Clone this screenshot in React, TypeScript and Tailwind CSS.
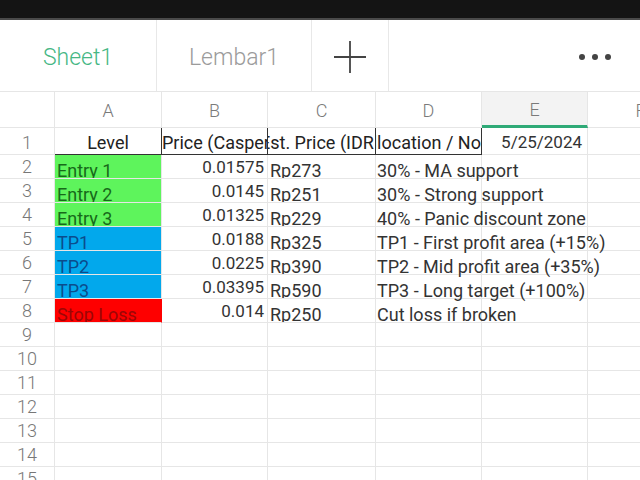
import React from 'react';

const FONT = { fontFamily: 'Roboto, "Noto Sans", sans-serif' };

type Tone = 'green' | 'blue' | 'red';

const ROWS: { level: string; price: string; idr: string; note: string; tone: Tone }[] = [
  { level: 'Entry 1', price: '0.01575', idr: 'Rp273', note: '30% - MA support', tone: 'green' },
  { level: 'Entry 2', price: '0.0145', idr: 'Rp251', note: '30% - Strong support', tone: 'green' },
  { level: 'Entry 3', price: '0.01325', idr: 'Rp229', note: '40% - Panic discount zone', tone: 'green' },
  { level: 'TP1', price: '0.0188', idr: 'Rp325', note: 'TP1 - First profit area (+15%)', tone: 'blue' },
  { level: 'TP2', price: '0.0225', idr: 'Rp390', note: 'TP2 - Mid profit area (+35%)', tone: 'blue' },
  { level: 'TP3', price: '0.03395', idr: 'Rp590', note: 'TP3 - Long target (+100%)', tone: 'blue' },
  { level: 'Stop Loss', price: '0.014', idr: 'Rp250', note: 'Cut loss if broken', tone: 'red' },
];

const toneCls: Record<Tone, string> = {
  green: 'bg-[#5ef45c] border-[#5ef45c] text-[#17691a]',
  blue: 'bg-[#02a8ec] border-[#02a8ec] text-[#0b4c8c]',
  red: 'bg-[#fe0000] border-[#fe0000] text-[#9c0606]',
};

const cell = 'h-[24px] overflow-hidden whitespace-nowrap border-r border-b border-[#e6e6e6] leading-[24px]';

export default function App() {
  const empty = Array.from({ length: 7 }, (_, i) => i + 9);

  return (
    <div className="w-[640px] h-[480px] overflow-hidden bg-white text-[18px]" style={FONT}>
      {/* status strip */}
      <div className="h-[18px] bg-[#141414]" />
      <div className="h-[2px] bg-[#4a4a4a]" />

      {/* sheet tabs */}
      <div className="h-[72px] flex border-b border-[#e6e6e6]">
        <div className="w-[157px] flex items-center justify-center pt-[5px] border-r border-[#e8e8e8] text-[23px] font-light text-[#46b784]">
          Sheet1
        </div>
        <div className="w-[155px] flex items-center justify-center pt-[5px] border-r border-[#e8e8e8] text-[23px] font-light text-[#9b9b9b]">
          Lembar1
        </div>
        <div className="w-[77px] flex items-center justify-center pt-[3px] border-r border-[#e8e8e8]">
          <svg width="34" height="34" viewBox="0 0 34 34">
            <path d="M17 1v32M1 17h32" stroke="#444" strokeWidth="1.8" />
          </svg>
        </div>
        <div className="flex-1 flex items-center justify-end pt-[3px] pr-[29px] gap-[7px]">
          <span className="w-[6px] h-[6px] rounded-full bg-[#444]" />
          <span className="w-[6px] h-[6px] rounded-full bg-[#444]" />
          <span className="w-[6px] h-[6px] rounded-full bg-[#444]" />
        </div>
      </div>

      {/* grid */}
      <div className="grid grid-cols-[55px_107px_106px_108px_106px_106px_106px] text-[#333]">
        {/* column headers */}
        <div className="h-[36px] border-r border-b border-[#e6e6e6]" />
        {['A', 'B', 'C', 'D'].map((c) => (
          <div key={c} className="h-[36px] border-r border-b border-[#e6e6e6] flex items-center justify-center pt-[1px] font-light text-[#7a7a7a]">
            {c}
          </div>
        ))}
        <div className="h-[36px] border-r border-[#e6e6e6] border-b-[3px] border-b-[#2faa77] bg-[#f3f3f3] flex items-center justify-center pt-[2px] font-light text-[#7a7a7a]">
          E
        </div>
        <div className="h-[36px] border-r border-b border-[#e6e6e6] flex items-center justify-center pt-[1px] font-light text-[#7a7a7a]">
          F
        </div>

        {/* row 1 */}
        <div className="h-[27px] border-r border-b border-[#e6e6e6] text-center pt-[3px] leading-[24px] font-light text-[#777]">1</div>
        <div className="h-[27px] border-r border-b border-[#333] text-center pt-[3px] leading-[24px] text-[#222]">Level</div>
        <div className="h-[27px] overflow-hidden whitespace-nowrap border-r border-b border-[#333] pt-[3px] leading-[24px] text-[#222]">
          Price (Casper)
        </div>
        <div className="h-[27px] overflow-hidden whitespace-nowrap border-r border-b border-[#333] pt-[3px] leading-[24px] text-[#222]">
          <span className="ml-[-8px]">Est. Price (IDR</span>
        </div>
        <div className="h-[27px] overflow-hidden whitespace-nowrap border-r border-b border-[#333] pt-[3px] leading-[24px] text-[#222]">
          <span className="ml-[-15px]">Allocation / No</span>
        </div>
        <div className="h-[27px] border-r border-b border-[#e6e6e6] text-right pr-[5px] pt-[2px] leading-[24px] text-[17px] text-[#333]">5/25/2024</div>
        <div className="h-[27px] border-r border-b border-[#e6e6e6]" />

        {/* data rows */}
        {ROWS.map((r, i) => (
          <React.Fragment key={r.level}>
            <div className={`${cell} text-center font-light text-[#777]`}>{i + 2}</div>
            <div className={`${cell} pl-[2px] pt-[4px] ${toneCls[r.tone]} ${i === ROWS.length - 1 ? 'border-b-[#e6e6e6]' : ''}`}>
              {r.level}
            </div>
            <div className={`${cell} text-right pr-[3px] text-[17px]`}>{r.price}</div>
            <div className={`${cell} pl-[2px] pt-[4px]`}>{r.idr}</div>
            <div className={`${cell} pl-[1px] pt-[4px] overflow-visible relative`}>{r.note}</div>
            <div className={`${cell}`} />
            <div className={`${cell}`} />
          </React.Fragment>
        ))}

        {/* empty rows */}
        {empty.map((n) => (
          <React.Fragment key={n}>
            <div className={`${cell} text-center font-light text-[#777]`}>{n}</div>
            <div className={cell} />
            <div className={cell} />
            <div className={cell} />
            <div className={cell} />
            <div className={cell} />
            <div className={cell} />
          </React.Fragment>
        ))}
      </div>
    </div>
  );
}
